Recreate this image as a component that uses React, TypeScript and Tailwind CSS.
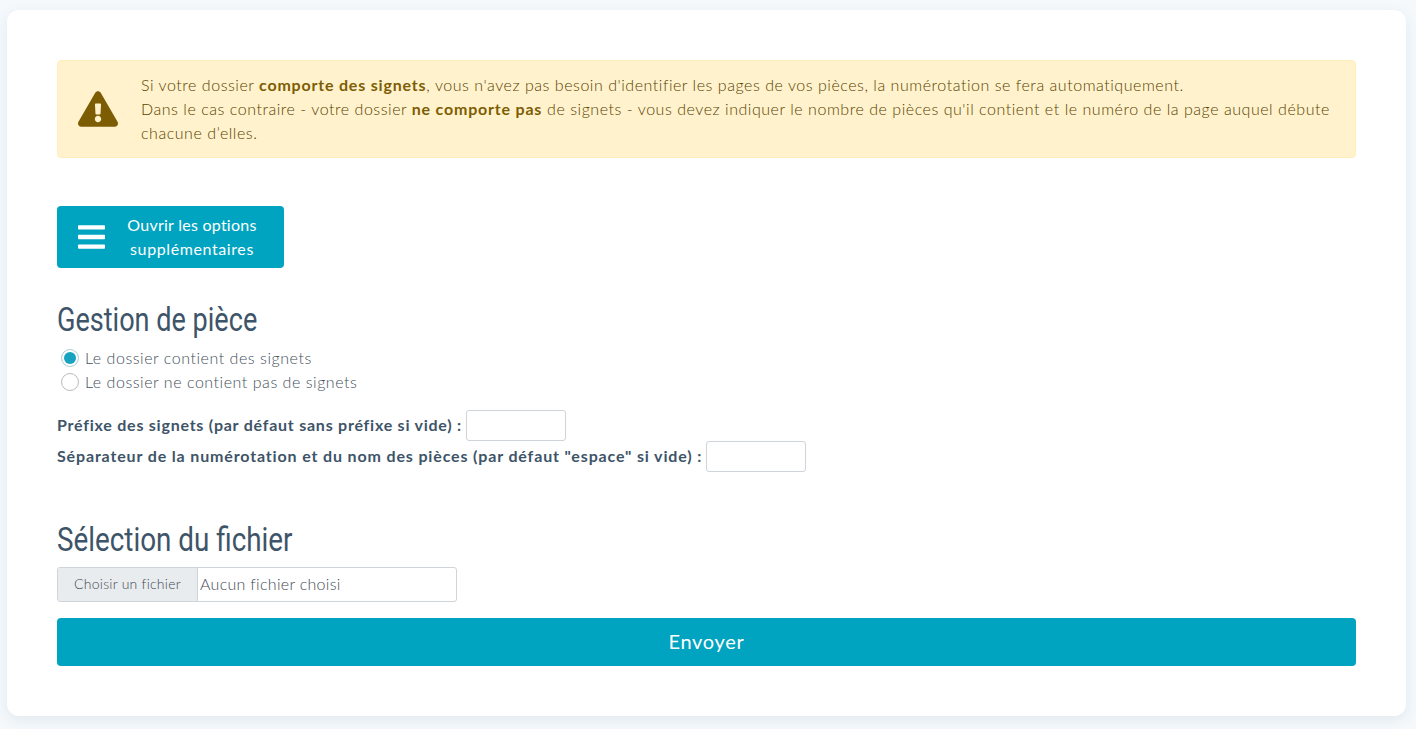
import { FaBars, FaExclamationTriangle } from "react-icons/fa";

const body = "font-['Lato',sans-serif]";

function Radio({ checked, label }: { checked?: boolean; label: string }) {
  return (
    <label className="flex h-6 items-center pl-1 text-[#44515c]">
      <span className={`flex h-[18px] w-[18px] items-center justify-center rounded-full border bg-white ${checked ? "border-[#a9cfd9]" : "border-[#b8bcc0]"}`}>
        {checked && <span className="h-3 w-3 rounded-full bg-[#17a2c0]" />}
      </span>
      <span className="ml-[6px] font-light tracking-[0.54px]">{label}</span>
    </label>
  );
}

export default function App() {
  return (
    <div className={`h-[729px] overflow-hidden bg-[#f5f9fc] pt-[10px] pl-[7px] pr-[10px] text-base ${body}`}>
      <main className="h-[706px] rounded-xl bg-white p-[50px] shadow-[0_4px_14px_rgba(60,90,120,0.10)]">
        <div className="flex h-[98px] items-center rounded border border-[#ffeeba] bg-[#fff2cd] pl-5 pr-5 text-[#584300]">
          <FaExclamationTriangle className="h-9 w-10 shrink-0 text-[#7d5d04]" />
          <div className="ml-[23px] leading-6 font-light tracking-[0.54px]">
            <p>Si votre dossier <b className="font-bold tracking-[0.8px] text-[#7d5d04]">comporte des signets</b>, vous n'avez pas besoin d'identifier les pages de vos pièces, la numérotation se fera automatiquement.</p>
            <p>Dans le cas contraire - votre dossier <b className="font-bold tracking-[0.8px] text-[#7d5d04]">ne comporte pas</b> de signets - vous devez indiquer le nombre de pièces qu'il contient et le numéro de la page auquel débute chacune d’elles.</p>
          </div>
        </div>

        <button className="mt-12 flex h-[62px] w-[227px] items-center rounded bg-[#00a4c0] pl-[21px] text-white">
          <FaBars className="h-8 w-[27px] shrink-0" />
          <span className="ml-[19px] w-[136px] text-center leading-6 tracking-[0.25px]">Ouvrir les options <span className="tracking-[0.6px]">supplémentaires</span></span>
        </button>

        <h2 className="mt-[33px] h-[38px] origin-left scale-x-[0.82] font-['Roboto',sans-serif] text-[33px] leading-[38px] font-normal text-[#3e5468]">Gestion de pièce</h2>
        <div className="mt-[7px]">
          <Radio checked label="Le dossier contient des signets" />
          <Radio label="Le dossier ne contient pas de signets" />
        </div>

        <div className="mt-[16px] flex h-[31px] items-center font-bold tracking-[0.76px] text-[#3e5468]">
          <span className="pb-px">Préfixe des signets (par défaut sans préfixe si vide) :</span>
          <input className="ml-[4px] h-[31px] w-[100px] rounded-[3px] border border-[#ced4da] bg-white" />
        </div>
        <div className="flex h-[31px] items-center font-bold tracking-[0.85px] text-[#3e5468]">
          <span className="pb-px">Séparateur de la numérotation et du nom des pièces (par défaut "espace" si vide) :</span>
          <input className="ml-[4px] h-[31px] w-[100px] rounded-[3px] border border-[#ced4da] bg-white" />
        </div>

        <h2 className="mt-[49px] h-[38px] origin-left scale-x-[0.843] font-['Roboto',sans-serif] text-[33px] leading-[38px] font-normal text-[#3e5468]">Sélection du fichier</h2>
        <div className="mt-[8px] flex h-[35px] w-[400px] items-center overflow-hidden rounded-[3px] border border-[#ced4da]">
          <span className="flex h-full w-[140px] items-center justify-center border-r border-[#ced4da] bg-[#e9ecef] pb-px text-sm font-light tracking-[0.25px] text-[#3f4952]">Choisir un fichier</span>
          <span className="ml-[2px] pb-[2px] font-light tracking-[0.3px] text-[#3f4b56]">Aucun fichier choisi</span>
        </div>
        <button className="mt-4 h-12 w-full rounded bg-[#00a4c0] pb-[3px] text-xl tracking-[0.7px] text-white">Envoyer</button>
      </main>
    </div>
  );
}
